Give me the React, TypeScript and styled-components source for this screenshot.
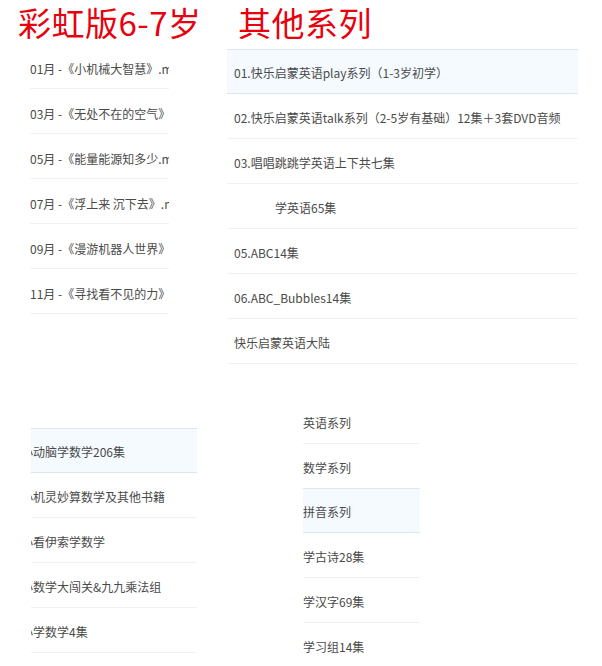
import React from "react";
import styled, { createGlobalStyle } from "styled-components";

const Global = createGlobalStyle`
  html, body { margin: 0; padding: 0; background: #ffffff; }
  body { font-family: "Noto Sans CJK SC", "Noto Sans", "Liberation Sans", sans-serif; }
`;

const Page = styled.div`
  width: 602px;
  height: 666px;
  overflow: hidden;
  background: #fff;
`;

const TopRow = styled.div`
  display: flex;
  align-items: flex-start;
`;

const Column = styled.div<{ $width: number }>`
  width: ${(p) => p.$width}px;
  flex-shrink: 0;
`;

const Title = styled.h2<{ $indent: number }>`
  margin: 0;
  padding-left: ${(p) => p.$indent}px;
  height: 44px;
  line-height: 44px;
  font-size: 33px;
  font-weight: 400;
  letter-spacing: 0.5px;
  color: #e8000d;
  white-space: nowrap;
`;

const List = styled.ul<{ $left: number; $width: number; $top?: number }>`
  list-style: none;
  margin: ${(p) => p.$top ?? 0}px 0 0 ${(p) => p.$left}px;
  padding: 0;
  width: ${(p) => p.$width}px;
  overflow: hidden;
  flex-shrink: 0;
`;

const Row = styled.li<{ $active?: boolean; $pad?: number; $indent?: number }>`
  box-sizing: border-box;
  height: 45px;
  display: flex;
  align-items: center;
  padding-left: ${(p) => p.$pad ?? 0}px;
  font-size: 12px;
  color: #4a4a4a;
  white-space: nowrap;
  overflow: hidden;
  text-indent: ${(p) => p.$indent ?? 0}px;
  border-bottom: 1px solid ${(p) => (p.$active ? "#dfe7ee" : "#f1f2f3")};
  ${(p) =>
    p.$active
      ? `
    background: #f4faff;
    border-top: 1px solid #dfe7ee;
    &:not(:first-child) { margin-top: -1px; }
  `
      : ""}
`;

const Text = styled.span<{ $shift?: number }>`
  display: inline-block;
  margin-top: ${(p) => p.$shift ?? 0}px;
`;

const BottomRow = styled.div`
  display: flex;
  align-items: flex-start;
  margin-top: 35px;
`;

const months = [
  "01月 -《小机械大智慧》.mp4",
  "03月 -《无处不在的空气》.mp4",
  "05月 -《能量能源知多少.mp4",
  "07月 -《浮上来 沉下去》.mp4",
  "09月 -《漫游机器人世界》.mp4",
  "11月 -《寻找看不见的力》.mp4",
];

const others: { t: string; pad?: number; active?: boolean }[] = [
  { t: "01.快乐启蒙英语play系列（1-3岁初学）", active: true },
  { t: "02.快乐启蒙英语talk系列（2-5岁有基础）12集＋3套DVD音频" },
  { t: "03.唱唱跳跳学英语上下共七集" },
  { t: "学英语65集", pad: 48 },
  { t: "05.ABC14集" },
  { t: "06.ABC_Bubbles14集" },
  { t: "快乐启蒙英语大陆" },
];

const maths: { t: string; active?: boolean }[] = [
  { t: "小动脑学数学206集", active: true },
  { t: "小机灵妙算数学及其他书籍" },
  { t: "小看伊索学数学" },
  { t: "小数学大闯关&九九乘法组" },
  { t: "小学数学4集" },
];

const series: { t: string; active?: boolean }[] = [
  { t: "英语系列" },
  { t: "数学系列" },
  { t: "拼音系列", active: true },
  { t: "学古诗28集" },
  { t: "学汉字69集" },
  { t: "学习组14集" },
];

export default function App() {
  return (
    <Page>
      <Global />
      <TopRow>
        <Column $width={227}>
          <Title $indent={18}>彩虹版6-7岁</Title>
          <List $left={30} $width={139}>
            {months.map((m) => (
              <Row key={m}>
                <Text $shift={4}>{m}</Text>
              </Row>
            ))}
          </List>
        </Column>
        <Column $width={351}>
          <Title $indent={11}>其他系列</Title>
          <List $left={0} $width={351} $top={5}>
            {others.map((o) => (
              <Row key={o.t} $active={o.active} $pad={o.pad ?? 7}>
                <Text $shift={2}>{o.t}</Text>
              </Row>
            ))}
          </List>
        </Column>
      </TopRow>
      <BottomRow>
        <List $left={31} $width={166} $top={29}>
          {maths.map((m) => (
            <Row key={m.t} $active={m.active} $indent={-10}>
              <Text $shift={2}>{m.t}</Text>
            </Row>
          ))}
        </List>
        <List $left={106} $width={117}>
          {series.map((s) => (
            <Row key={s.t} $active={s.active}>
              <Text $shift={2}>{s.t}</Text>
            </Row>
          ))}
        </List>
      </BottomRow>
    </Page>
  );
}
